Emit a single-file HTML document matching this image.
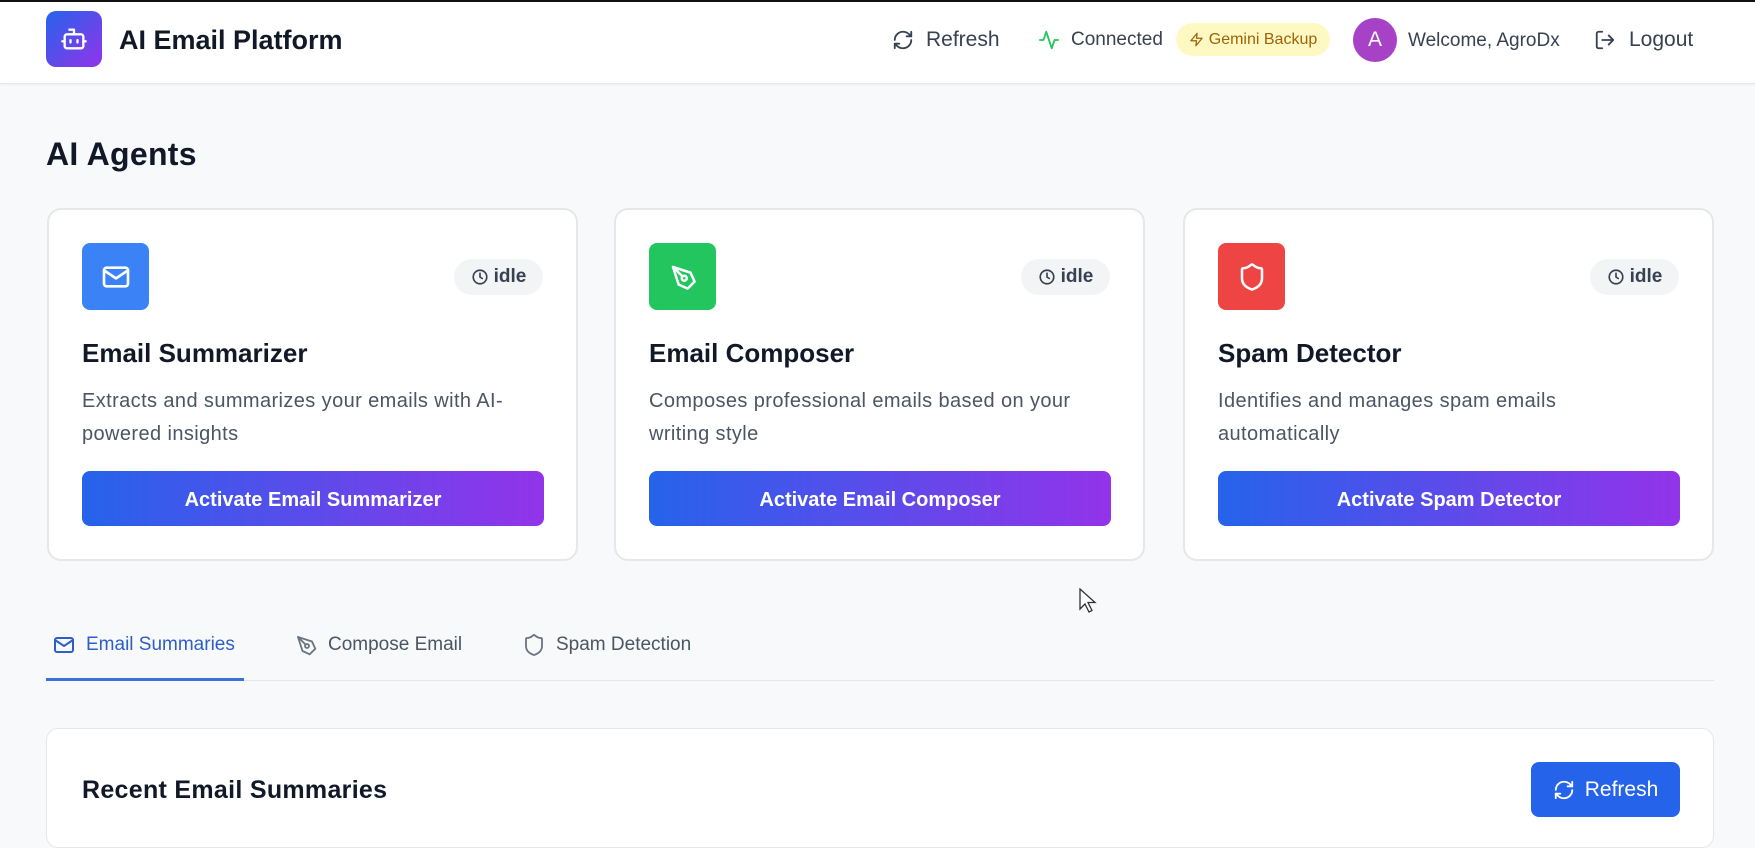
<!DOCTYPE html>
<html><head><meta charset="utf-8"><style>
*{box-sizing:border-box;margin:0;padding:0}
body{width:1755px;height:821px;overflow:hidden;background:#f8f9fb;font-family:"Liberation Sans",sans-serif;position:relative;color:#111827}
.abs{position:absolute}
.hdr{left:0;top:0;width:1755px;height:84px;background:#fff;border-top:2px solid #111;border-bottom:1px solid #e5e7eb;box-shadow:0 1px 3px rgba(0,0,0,.05)}
.logo{left:46px;top:11px;width:56px;height:56px;border-radius:10px;background:linear-gradient(135deg,#2563eb,#9333ea);display:flex;align-items:center;justify-content:center}
.nav{display:flex;align-items:center;color:#374151;white-space:nowrap}
.card{width:531px;height:353px;top:208px;background:#fff;border:2px solid #e5e7eb;border-radius:14px}
.ib{position:absolute;left:33px;top:33px;width:67px;height:67px;border-radius:8px;display:flex;align-items:center;justify-content:center}
.idle{position:absolute;right:33px;top:49px;width:89px;height:36px;border-radius:18px;background:#f3f4f6;display:flex;align-items:center;justify-content:center;gap:5px;font-size:19px;font-weight:bold;color:#374151}
.ct{position:absolute;left:33px;top:128px;font-size:26px;font-weight:600;color:#111827}
.cd{position:absolute;left:33px;top:175px;width:480px;font-size:20px;line-height:33px;color:#4b5563;letter-spacing:0.4px;white-space:nowrap}
.btn{position:absolute;left:33px;top:261px;width:462px;height:55px;border-radius:8px;background:linear-gradient(90deg,#2563eb,#9333ea);color:#fff;font-size:20px;font-weight:bold;display:flex;align-items:center;justify-content:center;padding-top:4px}
.tab{top:633px;display:flex;align-items:center;gap:10px;font-size:19px;color:#4b5563}
</style></head><body>
<div class="abs hdr"></div>
<div class="abs logo"><svg width="28" height="28" viewBox="0 0 24 24" fill="none" stroke="#fff" stroke-width="2" stroke-linecap="round" stroke-linejoin="round"><path d="M12 8V4H8"/><rect x="4" y="8" width="16" height="12" rx="2"/><path d="M2 14h2M20 14h2M15 13v2M9 13v2"/></svg></div>
<div class="abs" style="left:119px;top:25px;font-size:27px;font-weight:bold;color:#111827">AI Email Platform</div>

<div class="abs nav" style="left:892px;top:28px;font-size:21px;gap:12px"><svg width="22" height="22" viewBox="0 0 24 24" fill="none" stroke="#374151" stroke-width="2" stroke-linecap="round" stroke-linejoin="round"><path d="M3 12a9 9 0 0 1 9-9 9.75 9.75 0 0 1 6.74 2.74L21 8"/><path d="M21 3v5h-5"/><path d="M21 12a9 9 0 0 1-9 9 9.75 9.75 0 0 1-6.74-2.74L3 16"/><path d="M8 16H3v5"/></svg>Refresh</div>
<div class="abs nav" style="left:1038px;top:29px;font-size:19px;gap:11px"><svg width="22" height="22" viewBox="0 0 24 24" fill="none" stroke="#22c55e" stroke-width="2" stroke-linecap="round" stroke-linejoin="round"><path d="M22 12h-4l-3 9L9 3l-3 9H2"/></svg>Connected</div>
<div class="abs nav" style="left:1176px;top:23px;width:154px;height:33px;border-radius:17px;background:#fef9c3;color:#a16207;font-size:16px;justify-content:center;gap:5px"><svg width="15" height="15" viewBox="0 0 24 24" fill="none" stroke="#a16207" stroke-width="2" stroke-linejoin="round"><path d="M13 2 3 14h9l-1 8 10-12h-9l1-8z"/></svg>Gemini Backup</div>
<div class="abs" style="left:1353px;top:18px;width:44px;height:44px;border-radius:50%;background:#a742c6;color:#fff;font-size:21px;display:flex;align-items:center;justify-content:center">A</div>
<div class="abs nav" style="left:1408px;top:30px;font-size:19px">Welcome, AgroDx</div>
<div class="abs nav" style="left:1594px;top:28px;font-size:21px;gap:13px"><svg width="22" height="22" viewBox="0 0 24 24" fill="none" stroke="#374151" stroke-width="2" stroke-linecap="round" stroke-linejoin="round"><path d="M9 21H5a2 2 0 0 1-2-2V5a2 2 0 0 1 2-2h4"/><path d="m16 17 5-5-5-5M21 12H9"/></svg>Logout</div>

<div class="abs" style="left:46px;top:136px;font-size:32px;font-weight:bold;letter-spacing:0.3px">AI Agents</div>

<div class="abs card" style="left:47px">
<div class="ib" style="background:#3b82f6"><svg width="32" height="32" viewBox="0 0 24 24" fill="none" stroke="#fff" stroke-width="2" stroke-linecap="round" stroke-linejoin="round"><rect x="3" y="5" width="18" height="14" rx="2"/><path d="m3 7 9 6 9-6"/></svg></div>
<div class="idle"><svg width="18" height="18" viewBox="0 0 24 24" fill="none" stroke="#374151" stroke-width="2.2" stroke-linecap="round"><circle cx="12" cy="12" r="9"/><path d="M12 7v5l3 2"/></svg>idle</div>
<div class="ct">Email Summarizer</div>
<div class="cd">Extracts and summarizes your emails with AI-<br>powered insights</div>
<div class="btn">Activate Email Summarizer</div></div>

<div class="abs card" style="left:614px">
<div class="ib" style="background:#22c55e"><svg width="30" height="30" viewBox="0 0 24 24" fill="none" stroke="#fff" stroke-width="2" stroke-linecap="round" stroke-linejoin="round"><path d="M15.7 21.3 21.3 15.7 18 8.5 4 4l4.5 14z"/><path d="m4 4 7.6 7.6"/><circle cx="13" cy="13" r="2"/></svg></div>
<div class="idle"><svg width="18" height="18" viewBox="0 0 24 24" fill="none" stroke="#374151" stroke-width="2.2" stroke-linecap="round"><circle cx="12" cy="12" r="9"/><path d="M12 7v5l3 2"/></svg>idle</div>
<div class="ct">Email Composer</div>
<div class="cd">Composes professional emails based on your<br>writing style</div>
<div class="btn">Activate Email Composer</div></div>

<div class="abs card" style="left:1183px">
<div class="ib" style="background:#ef4444"><svg width="30" height="30" viewBox="0 0 24 24" fill="none" stroke="#fff" stroke-width="2" stroke-linecap="round" stroke-linejoin="round"><path d="M20 13c0 5-3.5 7.5-7.66 8.95a1 1 0 0 1-.67-.01C7.5 20.5 4 18 4 13V6a1 1 0 0 1 1-1c2 0 4.5-1.2 6.24-2.72a1.17 1.17 0 0 1 1.52 0C14.51 3.810 17 5 19 5a1 1 0 0 1 1 1z"/></svg></div>
<div class="idle"><svg width="18" height="18" viewBox="0 0 24 24" fill="none" stroke="#374151" stroke-width="2.2" stroke-linecap="round"><circle cx="12" cy="12" r="9"/><path d="M12 7v5l3 2"/></svg>idle</div>
<div class="ct">Spam Detector</div>
<div class="cd">Identifies and manages spam emails<br>automatically</div>
<div class="btn">Activate Spam Detector</div></div>

<svg class="abs" style="left:1079px;top:588px" width="18" height="26" viewBox="0 0 18 26"><path d="M1 1v20l5-5 4 8 3-1.5-4-8h7z" fill="#fff" stroke="#333" stroke-width="1.3"/></svg>

<div class="abs" style="left:46px;top:680px;width:1668px;height:1px;background:#e5e7eb"></div>
<div class="abs" style="left:46px;top:678px;width:198px;height:3px;background:#3b72d9"></div>
<div class="abs tab" style="left:52px;color:#2e5fc9"><svg width="24" height="24" viewBox="0 0 24 24" fill="none" stroke="#2e5fc9" stroke-width="2" stroke-linecap="round" stroke-linejoin="round"><rect x="3" y="5" width="18" height="14" rx="2"/><path d="m3 7 9 6 9-6"/></svg>Email Summaries</div>
<div class="abs tab" style="left:294px"><svg width="24" height="24" viewBox="0 0 24 24" fill="none" stroke="#6b7280" stroke-width="1.8" stroke-linecap="round" stroke-linejoin="round"><path d="M15.7 21.3 21.3 15.7 18 8.5 4 4l4.5 14z"/><path d="m4 4 7.6 7.6"/><circle cx="13" cy="13" r="2"/></svg>Compose Email</div>
<div class="abs tab" style="left:522px"><svg width="24" height="24" viewBox="0 0 24 24" fill="none" stroke="#6b7280" stroke-width="1.8" stroke-linecap="round" stroke-linejoin="round"><path d="M20 13c0 5-3.5 7.5-7.66 8.95a1 1 0 0 1-.67-.01C7.5 20.5 4 18 4 13V6a1 1 0 0 1 1-1c2 0 4.5-1.2 6.24-2.72a1.17 1.17 0 0 1 1.52 0C14.51 3.81 17 5 19 5a1 1 0 0 1 1 1z"/></svg>Spam Detection</div>

<div class="abs" style="left:46px;top:728px;width:1668px;height:120px;background:#fff;border:1px solid #e5e7eb;border-radius:12px"></div>
<div class="abs" style="left:82px;top:776px;font-size:25px;font-weight:600;letter-spacing:0.3px">Recent Email Summaries</div>
<div class="abs" style="left:1531px;top:762px;width:149px;height:55px;border-radius:8px;background:#2563eb;color:#fff;font-size:21px;display:flex;align-items:center;justify-content:center;gap:10px"><svg width="22" height="22" viewBox="0 0 24 24" fill="none" stroke="#fff" stroke-width="2" stroke-linecap="round" stroke-linejoin="round"><path d="M3 12a9 9 0 0 1 9-9 9.75 9.75 0 0 1 6.74 2.74L21 8"/><path d="M21 3v5h-5"/><path d="M21 12a9 9 0 0 1-9 9 9.75 9.75 0 0 1-6.74-2.74L3 16"/><path d="M8 16H3v5"/></svg>Refresh</div>
</body></html>
